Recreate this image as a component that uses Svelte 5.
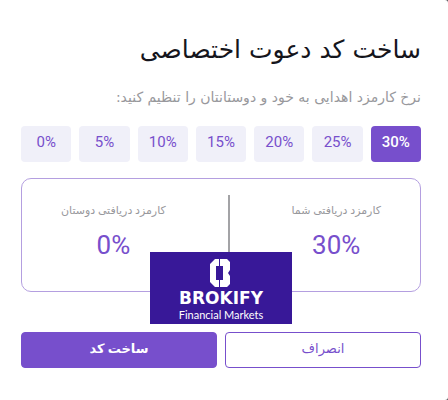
<script>
    const rates = [30, 25, 20, 15, 10, 5, 0];
    let selected = $state(30);
    let friendRate = $derived(30 - selected);
</script>

<div class="dialog" dir="rtl" lang="fa">
    <h1>ساخت کد دعوت اختصاصی</h1>
    <p class="hint">نرخ کارمزد اهدایی به خود و دوستانتان را تنظیم کنید:</p>

    <div class="rates">
        {#each rates as rate}
            <button
                type="button"
                class="rate"
                class:active={selected === rate}
                aria-pressed={selected === rate}
                onclick={() => (selected = rate)}
            >
                <span dir="ltr">{rate}%</span>
            </button>
        {/each}
    </div>

    <div class="summary">
        <div class="share">
            <span class="share-label">کارمزد دریافتی شما</span>
            <span class="share-value" dir="ltr">{selected}%</span>
        </div>
        <div class="divider"></div>
        <div class="share">
            <span class="share-label">کارمزد دریافتی دوستان</span>
            <span class="share-value" dir="ltr">{friendRate}%</span>
        </div>

        <div class="brand" dir="ltr" lang="en">
            <svg width="22" height="28" viewBox="0 0 22 28" aria-hidden="true">
                <path
                    fill="#fff"
                    d="M5 0H9V7H6V21H9V28H5L0 23V5ZM10 0H17L20 3V11L18 14L20 17V25L17 28H10V21H13V7H10Z"
                />
            </svg>
            <span class="brand-name">BROKIFY</span>
            <span class="brand-tag">Financial Markets</span>
        </div>
    </div>

    <div class="actions">
        <button type="button" class="cancel">انصراف</button>
        <button type="button" class="create">ساخت کد</button>
    </div>
</div>

<style>
    :global(body) {
        margin: 0;
        background: #55555a;
    }

    .dialog {
        box-sizing: border-box;
        min-height: 100vh;
        padding: 32px 27px 32px 21px;
        background: #fff;
        border-radius: 0 3px 3px 0;
        font-family: Roboto, "DejaVu Sans", sans-serif;
    }

    h1,
    .hint {
        font-family: "DejaVu Sans", sans-serif;
    }

    h1 {
        margin: 0;
        font-size: 25px;
        font-weight: 400;
        line-height: 36px;
        color: #15151c;
    }

    .hint {
        margin: 16px 0;
        font-size: 14px;
        line-height: 26px;
        color: #98989c;
    }

    button {
        box-sizing: border-box;
        height: 36px;
        padding: 0 0 4px;
        border: 0;
        border-radius: 4px;
        font-family: inherit;
        cursor: pointer;
    }

    .rates,
    .actions {
        display: flex;
        gap: 8px;
    }

    .rate {
        flex: 1;
        padding-bottom: 5px;
        background: #f0f0f9;
        color: #774fcc;
        font-size: 15px;
    }

    .rate.active {
        background: #774fcc;
        color: #fff;
        font-weight: 500;
    }

    .summary {
        position: relative;
        display: flex;
        justify-content: space-between;
        margin: 16px 0 40px;
        padding: 16px 39px;
        border: 1px solid #b49fe0;
        border-radius: 10px;
    }

    .share {
        display: flex;
        flex-direction: column;
        align-items: center;
        gap: 4px;
        padding: 4px 0 12px;
    }

    .share-label {
        font-size: 11px;
        line-height: 24px;
        color: #98989c;
    }

    .share-value {
        font-size: 26px;
        line-height: 36px;
        color: #774fcc;
    }

    .divider {
        width: 2px;
        background: #a3a3a6;
    }

    .brand {
        position: absolute;
        top: 73px;
        left: 50%;
        transform: translateX(-50%);
        box-sizing: border-box;
        display: flex;
        flex-direction: column;
        align-items: center;
        width: 142px;
        height: 72px;
        padding-top: 7px;
        background: #381898;
        color: #fff;
    }

    .brand-name {
        font-family: "DejaVu Sans", sans-serif;
        font-size: 17px;
        font-weight: 700;
        line-height: 22px;
    }

    .brand-tag {
        font-family: Lato, sans-serif;
        font-size: 11px;
        line-height: 12px;
    }

    .actions button {
        flex: 1;
        border: 1px solid #774fcc;
        font-size: 13px;
    }

    .actions .cancel {
        background: #fff;
        color: #774fcc;
    }

    .actions .create {
        background: #774fcc;
        color: #fff;
        font-weight: 700;
    }
</style>
